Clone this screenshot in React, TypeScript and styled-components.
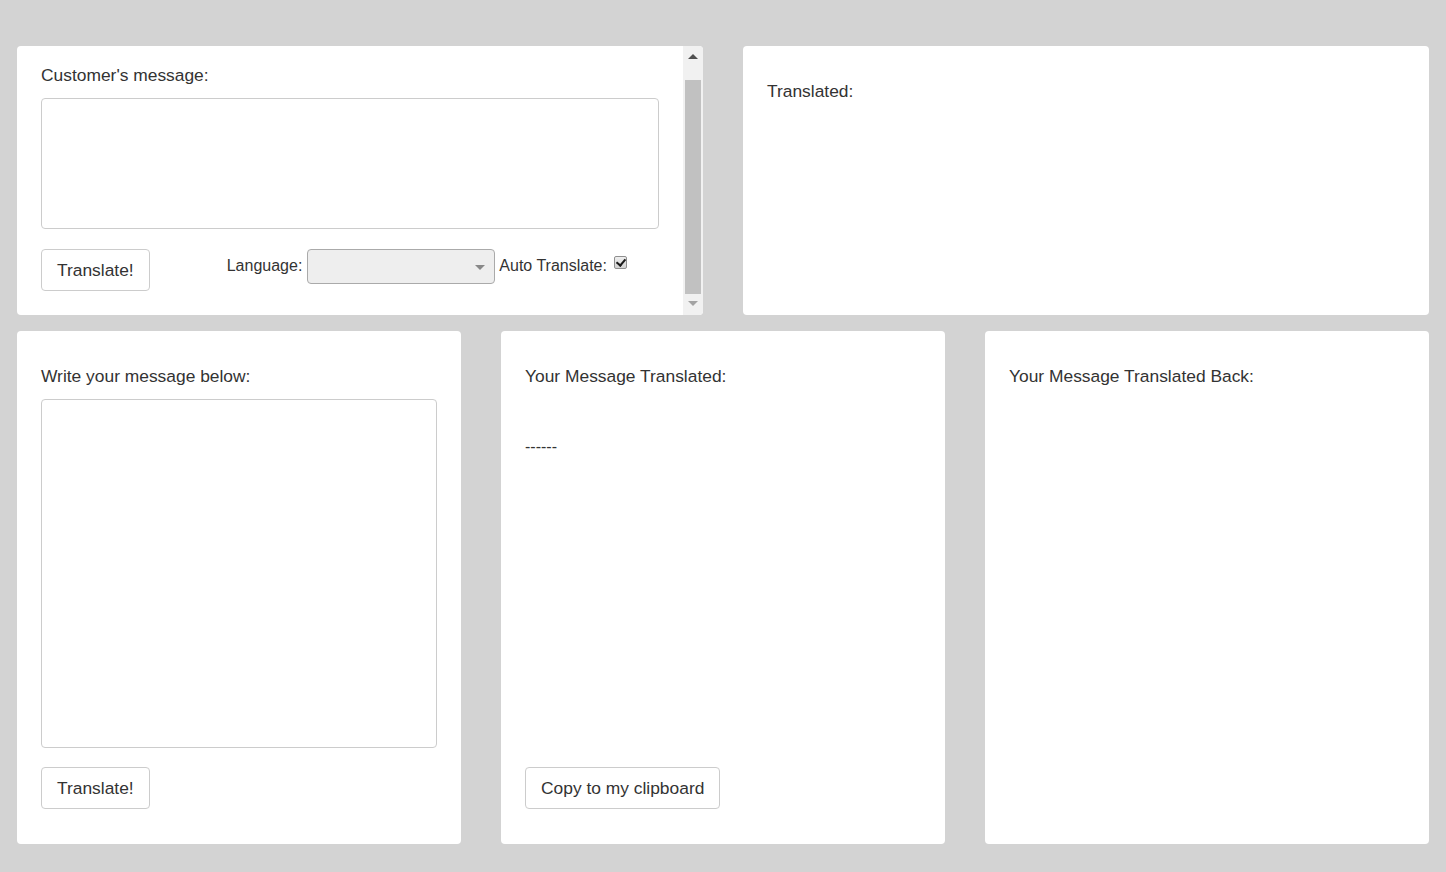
import React, { useEffect, useRef } from "react";
import styled, { createGlobalStyle } from "styled-components";

const GlobalStyle = createGlobalStyle`
  html, body { margin: 0; padding: 0; background: #d3d3d3; }
  body { font-family: "Liberation Sans", Arial, Helvetica, sans-serif; color: #333; }
  * { box-sizing: border-box; }
`;

const Page = styled.div`
  display: flex;
  flex-direction: column;
  gap: 16px;
  padding: 46px 17px 0;
  width: 1446px;
  height: 872px;
`;

const Row = styled.div<{ $cols: number; $height: number }>`
  display: grid;
  grid-template-columns: repeat(${(p) => p.$cols}, 1fr);
  grid-template-rows: 100%;
  column-gap: 40px;
  height: ${(p) => p.$height}px;
  flex: none;
`;

const Panel = styled.section`
  background: #fff;
  border-radius: 4px;
  padding: 24px 24px 35px;
  display: flex;
  flex-direction: column;
  align-items: flex-start;
  min-height: 0;
`;

const ScrollPanel = styled.section`
  background: #fff;
  border-radius: 4px;
  display: flex;
  min-height: 0;
  overflow: hidden;
`;

const ScrollArea = styled.div`
  flex: 1;
  min-width: 0;
  padding: 24px;
  overflow-y: auto;
  scrollbar-width: none;
  &::-webkit-scrollbar { display: none; }
`;

const ScrollBar = styled.div`
  flex: none;
  width: 20px;
  display: flex;
  flex-direction: column;
  background: #f1f1f1;
`;

const Arrow = styled.div<{ $down?: boolean; $color: string }>`
  flex: none;
  height: 20px;
  display: flex;
  justify-content: center;
  align-items: ${(p) => (p.$down ? "flex-start" : "center")};
  padding-top: ${(p) => (p.$down ? "6px" : "0")};

  &::before {
    content: "";
    border-left: 5px solid transparent;
    border-right: 5px solid transparent;
    ${(p) =>
      p.$down
        ? `border-top: 5px solid ${p.$color};`
        : `border-bottom: 5px solid ${p.$color};`}
  }
`;

const Track = styled.div`
  flex: 1;
  display: flex;
  flex-direction: column;
  padding: 14px 2px 0;
  min-height: 0;
`;

const Thumb = styled.div`
  height: 214px;
  flex: none;
  background: #c1c1c1;
`;

const Label = styled.div<{ $gap?: number }>`
  margin-top: 11px;
  margin-bottom: ${(p) => p.$gap ?? 13}px;
  font-size: 17.4px;
  line-height: 20px;
  color: #333;
`;

const TextArea = styled.textarea<{ $h: number }>`
  display: block;
  width: 100%;
  height: ${(p) => p.$h}px;
  flex: none;
  border: 1px solid #ccc;
  border-radius: 4px;
  resize: none;
  padding: 6px 12px;
  font: inherit;
  outline: none;
`;

const Button = styled.button<{ $top?: string }>`
  flex: none;
  height: 42px;
  padding: 0 15px;
  margin-top: ${(p) => p.$top ?? "0"};
  background: #fff;
  border: 1px solid #ccc;
  border-radius: 4px;
  font-family: "Liberation Sans", Arial, sans-serif;
  font-size: 17.4px;
  color: #333;
  cursor: pointer;
`;

const Controls = styled.div`
  display: flex;
  align-items: flex-start;
  margin-top: 20px;
`;

const Options = styled.div`
  display: flex;
  align-items: center;
  height: 33px;
  margin-left: 77px;
  font-size: 16px;
  color: #333;
`;

const Select = styled.div`
  position: relative;
  flex: none;
  width: 188px;
  height: 35px;
  margin: 2px 4px 0 5px;
  background: #eee;
  border: 1px solid #aaa;
  border-radius: 4px;

  &::after {
    content: "";
    position: absolute;
    right: 9px;
    top: 15px;
    border-left: 5px solid transparent;
    border-right: 5px solid transparent;
    border-top: 5px solid #888;
  }
`;

const Check = styled.input`
  appearance: none;
  position: relative;
  flex: none;
  width: 13px;
  height: 13px;
  margin: 0 0 6px 7px;
  border: 1px solid #8f8f8f;
  border-radius: 2px;
  background: linear-gradient(#efefef, #d2d2d2);

  &::after {
    content: "";
    position: absolute;
    left: 3px;
    top: 0px;
    width: 4px;
    height: 7px;
    border-right: 2px solid #1a1a1a;
    border-bottom: 2px solid #1a1a1a;
    transform: rotate(40deg);
  }
`;

const Dashes = styled.div`
  margin-top: 38px;
  font-size: 16px;
  line-height: 20px;
`;

const Spacer = styled.div`
  flex: 1;
`;

export default function App() {
  const scrollRef = useRef<HTMLDivElement>(null);
  useEffect(() => {
    if (scrollRef.current) scrollRef.current.scrollTop = scrollRef.current.scrollHeight;
  }, []);

  return (
    <>
      <GlobalStyle />
      <Page>
        <Row $cols={2} $height={269}>
          <ScrollPanel>
            <ScrollArea ref={scrollRef}>
              <Label>Customer's message:</Label>
              <TextArea $h={131} />
              <Controls>
                <Button>Translate!</Button>
                <Options>
                  <span>Language:</span>
                  <Select />
                  <span>Auto Translate:</span>
                  <Check type="checkbox" defaultChecked />
                </Options>
              </Controls>
            </ScrollArea>
            <ScrollBar aria-hidden>
              <Arrow $color="#505050" />
              <Track>
                <Thumb />
              </Track>
              <Arrow $down $color="#a3a3a3" />
            </ScrollBar>
          </ScrollPanel>
          <Panel>
            <Label>Translated:</Label>
          </Panel>
        </Row>
        <Row $cols={3} $height={513}>
          <Panel>
            <Label>Write your message below:</Label>
            <TextArea $h={349} />
            <Button $top="19px">Translate!</Button>
          </Panel>
          <Panel>
            <Label>Your Message Translated:</Label>
            <Dashes>------</Dashes>
            <Spacer />
            <Button>Copy to my clipboard</Button>
          </Panel>
          <Panel>
            <Label>Your Message Translated Back:</Label>
          </Panel>
        </Row>
      </Page>
    </>
  );
}
